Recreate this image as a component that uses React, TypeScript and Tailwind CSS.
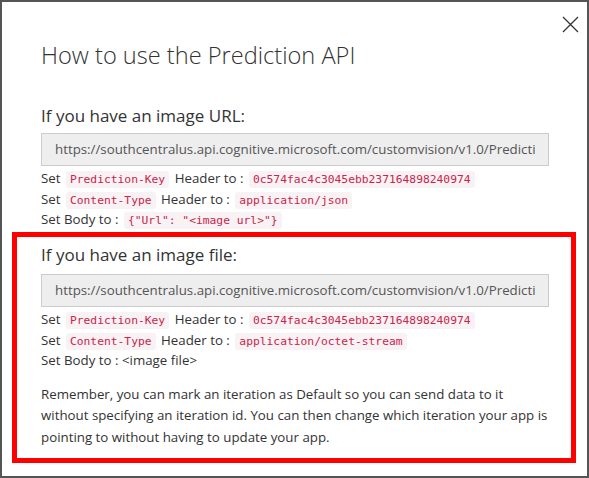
import React from "react";

const PREDICTION_URL =
    "https://southcentralus.api.cognitive.microsoft.com/customvision/v1.0/Prediction/9a3f0d3c-1d2e-4b8a-9f1e-5d7c2b6a4e11/image";
const PREDICTION_KEY = "0c574fac4c3045ebb237164898240974";

function Code({ children }: { children: React.ReactNode }) {
    return (
        <code className="mx-[2px] rounded-[3px] bg-[#f9f2f4] px-[4px] py-[2px] font-['DejaVu_Sans_Mono',monospace] text-[11.3px] leading-[14px] text-[#c7254e]">
            {children}
        </code>
    );
}

function UrlBox({ className }: { className: string }) {
    return (
        <div className={`${className} h-[33px] w-[508px] border border-[#ccc] bg-[#eee] px-[13px]`}>
            <div className="overflow-hidden whitespace-nowrap text-[13.3px] leading-[31px] text-[#555]">
                {PREDICTION_URL}
            </div>
        </div>
    );
}

function HeaderRows({ contentType, body }: { contentType: string; body: React.ReactNode }) {
    return (
        <div className="mt-[2px] text-[13.3px] leading-[20.5px] text-[#333]">
            <div>
                Set <Code>Prediction-Key</Code> Header to : <Code>{PREDICTION_KEY}</Code>
            </div>
            <div>
                Set <Code>Content-Type</Code> Header to : <Code>{contentType}</Code>
            </div>
            <div>Set Body to : {body}</div>
        </div>
    );
}

export default function App() {
    return (
        <div className="relative h-[478px] w-[589px] overflow-hidden border-2 border-[#555] bg-white font-['Open_Sans',sans-serif] text-[#333]">
            {/* close button */}
            <button className="absolute right-[8px] top-[14px] p-0 text-[#333]">
                <svg width="17" height="17" viewBox="0 0 17 17">
                    <path d="M1 1 L16 16 M16 1 L1 16" stroke="currentColor" strokeWidth="1.3" fill="none" />
                </svg>
            </button>

            {/* title */}
            <h1 className="ml-[39px] mt-[36px] text-[23.6px] font-light leading-[34px]">
                How to use the Prediction API
            </h1>

            {/* image url section */}
            <div className="ml-[39px] mt-[32px]">
                <h2 className="text-[17px] leading-[24px]">If you have an image URL:</h2>
                <UrlBox className="mt-[5px]" />
                <HeaderRows
                    contentType="application/json"
                    body={<Code>{'{"Url": "<image url>"}'}</Code>}
                />
            </div>

            {/* image file section, highlighted */}
            <div className="mt-[2.5px] ml-[10px] mr-[11px] h-[231px] border-[5px] border-[#ff0000] pl-[24px]">
                <h2 className="mt-[6px] text-[17px] leading-[24px]">If you have an image file:</h2>
                <UrlBox className="mt-[7px]" />
                <HeaderRows contentType="application/octet-stream" body="<image file>" />
                <p className="mt-[13.5px] w-[511px] text-[13.3px] leading-[21.3px] text-[#333]">
                    Remember, you can mark an iteration as Default so you can send data to it
                    without specifying an iteration id. You can then change which iteration your
                    app is pointing to without having to update your app.
                </p>
            </div>
        </div>
    );
}
